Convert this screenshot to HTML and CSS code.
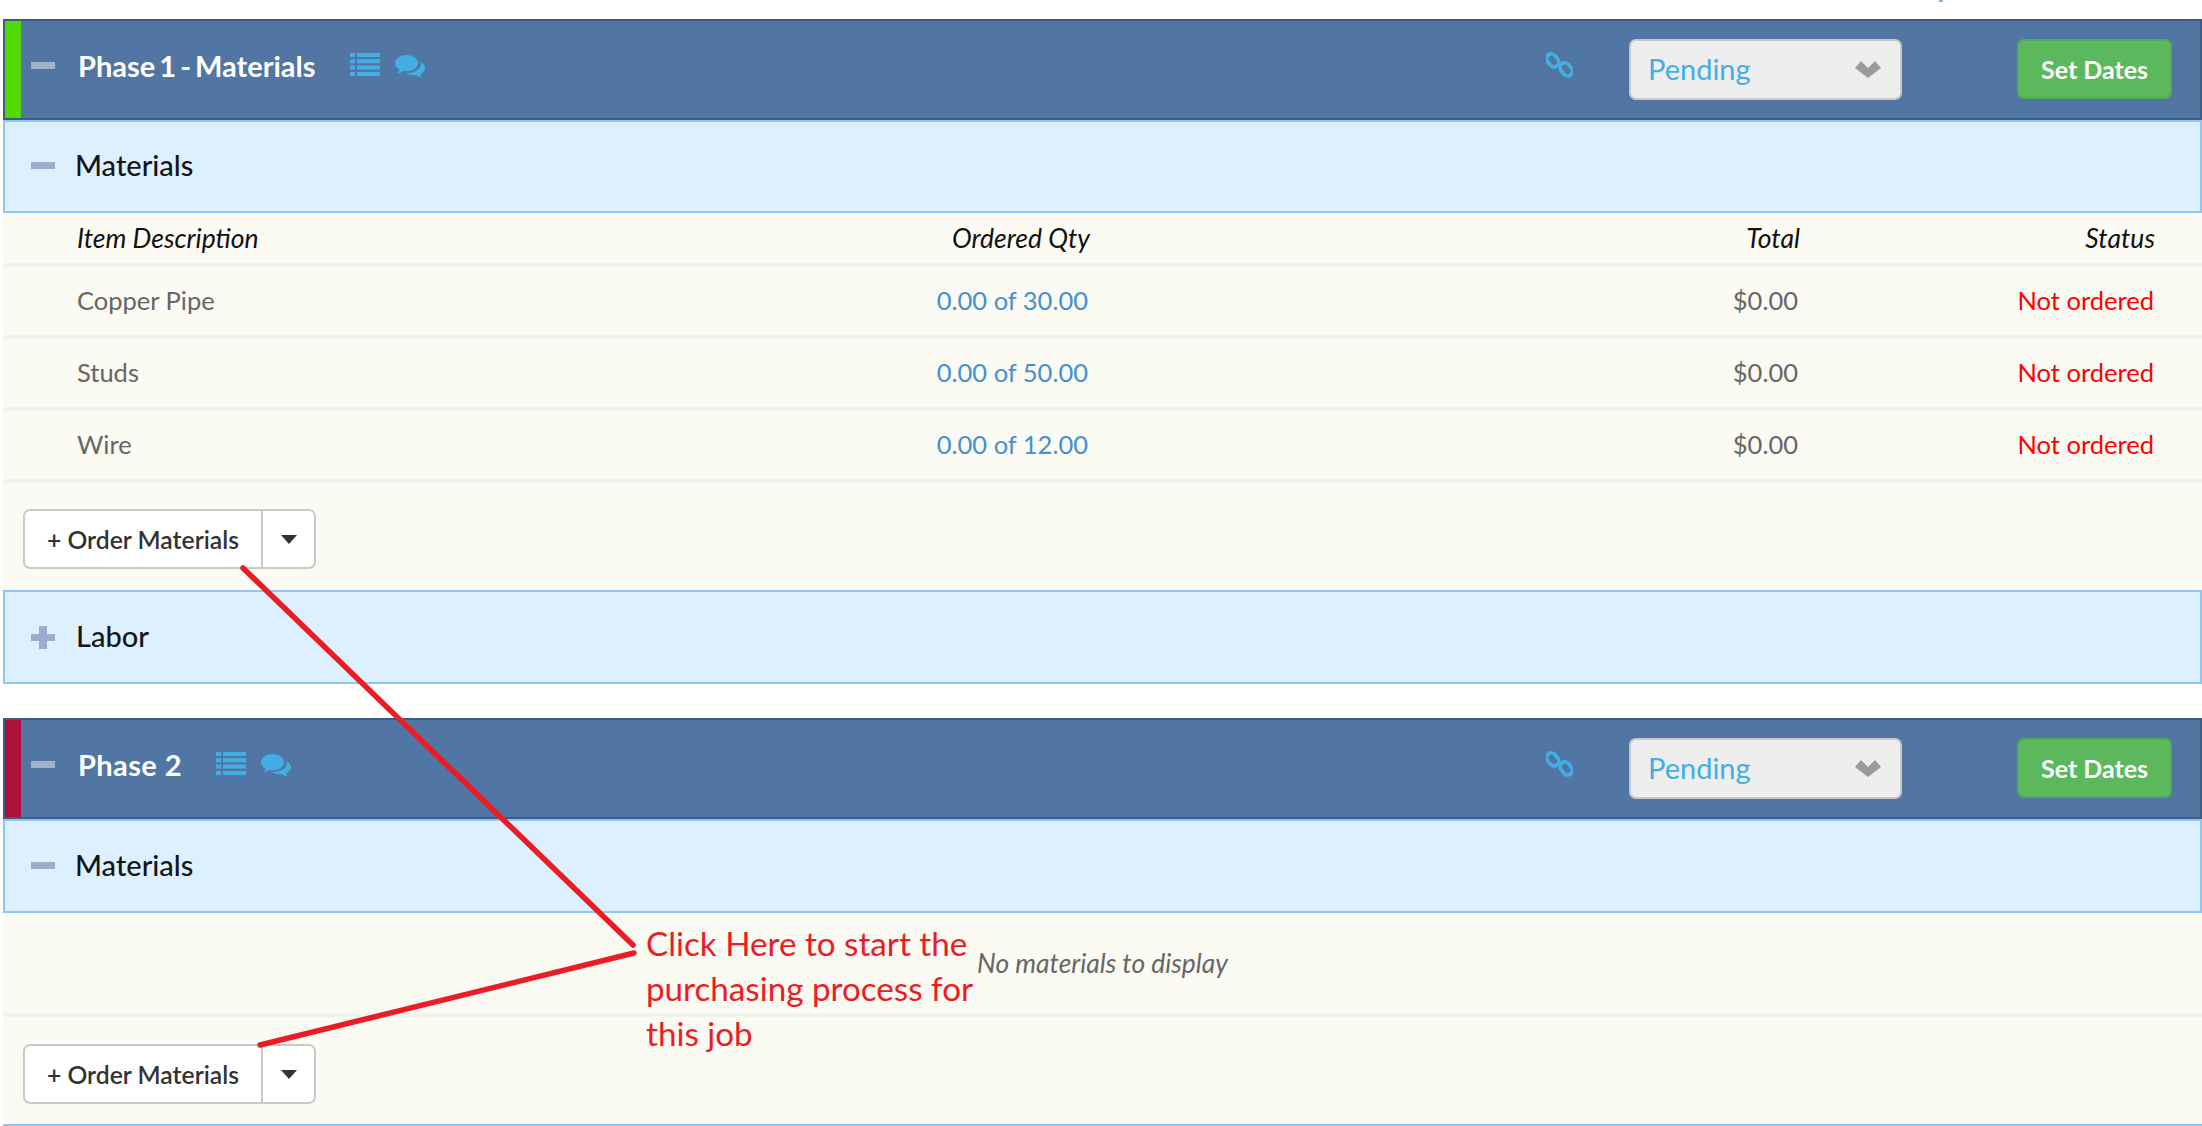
FILE: index.html
```html
<!DOCTYPE html>
<html lang="en">
<head>
<meta charset="utf-8">
<title>Phases</title>
<link rel="stylesheet" href="styles.css">
</head>
<body>
<svg width="0" height="0" class="defs">
  <symbol id="list" viewBox="0 0 30 23"><path d="M0 0h5v4H0zM7 0h23v4H7zM0 6.300h5v4H0zM7 6.300h23v4H7zM0 12.600h5v4H0zM7 12.600h23v4H7zM0 19h5v4H0zM7 19h23v4H7z"/></symbol>
  <symbol id="chat" viewBox="0 0 30 24"><path d="M11.500 0C5.200 0 0 3.700 0 8.200c0 2.700 1.800 5 4.600 6.500-.4 1.300-1.100 2.500-2.200 3.600 2.300-.3 4.500-1.200 6.200-2.300.9.200 1.900.300 2.900.300 6.300 0 11.500-3.700 11.500-8.100S17.800 0 11.500 0z"/><path d="M25.500 6.500c.3.700.4 1.400.4 2.100 0 5.300-5.700 9.400-12.800 9.400-.9 0-1.800-.1-2.600-.2 1.900 1.500 4.700 2.500 7.700 2.500.9 0 1.700-.1 2.500-.2 1.500 1.200 3.500 2.100 6.100 2.800-.9-1.100-1.500-2.200-1.700-3.400 2.900-1.400 4.900-3.700 4.900-6.300 0-2.700-2.500-5.300-4.500-6.700z"/></symbol>
  <symbol id="link" viewBox="0 0 27 28"><g fill="none" stroke-width="3.600"><rect x="2" y="2.500" width="9.500" height="14" rx="4.700" transform="rotate(-38 6.700 9.500)"/><rect x="15.500" y="11.500" width="9.500" height="14" rx="4.700" transform="rotate(-38 20.200 18.500)"/></g></symbol>
  <symbol id="chev" viewBox="0 0 26 17"><path d="M0 7l6-7 7 7 7-7 6 7-13 10z"/></symbol>
</svg>

<main class="page">
  <div class="top-mark"></div>

  <section class="phase">
    <header class="phase-bar">
      <span class="flag flag-green"></span>
      <span class="toggle toggle-light"></span>
      <h2 class="phase-title">Phase 1 - Materials</h2>
      <svg class="ico ico-list"><use href="#list"/></svg>
      <svg class="ico ico-chat"><use href="#chat"/></svg>
      <svg class="ico ico-link"><use href="#link"/></svg>
      <div class="status-select"><span>Pending</span><svg class="chev"><use href="#chev"/></svg></div>
      <button class="set-dates">Set Dates</button>
    </header>
    <div class="group-bar">
      <span class="toggle"></span>
      <h3 class="group-title">Materials</h3>
    </div>
    <div class="grid-row head-row">
      <span>Item Description</span><span class="r">Ordered Qty</span><span class="r">Total</span><span class="r">Status</span>
    </div>
    <div class="grid-row item-row">
      <span>Copper Pipe</span><span class="r qty">0.00 of 30.00</span><span class="r">$0.00</span><span class="r not-ordered">Not ordered</span>
    </div>
    <div class="grid-row item-row">
      <span>Studs</span><span class="r qty">0.00 of 50.00</span><span class="r">$0.00</span><span class="r not-ordered">Not ordered</span>
    </div>
    <div class="grid-row item-row">
      <span>Wire</span><span class="r qty">0.00 of 12.00</span><span class="r">$0.00</span><span class="r not-ordered">Not ordered</span>
    </div>
    <div class="order-foot">
      <div class="split-btn"><span class="split-main">+ Order Materials</span><span class="split-caret"><i></i></span></div>
    </div>
    <div class="group-bar group-bar-labor">
      <span class="toggle toggle-plus"></span>
      <h3 class="group-title group-title-labor">Labor</h3>
    </div>
  </section>

  <section class="phase phase-second">
    <header class="phase-bar">
      <span class="flag flag-red"></span>
      <span class="toggle toggle-light"></span>
      <h2 class="phase-title phase-title-short">Phase 2</h2>
      <svg class="ico ico-list"><use href="#list"/></svg>
      <svg class="ico ico-chat"><use href="#chat"/></svg>
      <svg class="ico ico-link"><use href="#link"/></svg>
      <div class="status-select"><span>Pending</span><svg class="chev"><use href="#chev"/></svg></div>
      <button class="set-dates">Set Dates</button>
    </header>
    <div class="group-bar group-bar-tall">
      <span class="toggle"></span>
      <h3 class="group-title">Materials</h3>
    </div>
    <div class="empty-row">No materials to display</div>
    <div class="order-foot order-foot-last">
      <div class="split-btn"><span class="split-main">+ Order Materials</span><span class="split-caret"><i></i></span></div>
    </div>
  </section>

  <svg class="callout-lines" width="2202" height="1126" viewBox="0 0 2202 1126">
    <path d="M243 568L633 945M634 953L260 1045"/>
  </svg>
  <p class="callout-text">Click Here to start the<br>purchasing process for<br>this job</p>
</main>
</body>
</html>
```
FILE: styles.css
```css
* { box-sizing: border-box; }
html, body { margin: 0; padding: 0; background: #fff; }
body { width: 2202px; height: 1126px; overflow: hidden; font-family: "Lato", "Open Sans", sans-serif; }
.defs { position: absolute; }
.page { position: relative; width: 2202px; height: 1126px; padding: 19px 0 0 3px; }
.top-mark { position: absolute; left: 1939px; top: 0; width: 4px; height: 2px; background: #7db7ee; }

.phase-second { margin-top: 34px; }

.phase-bar { height: 101px; display: flex; align-items: center; background: #5176a3; border: 2px solid #3b5c85; position: relative; }
.flag { width: 16px; align-self: stretch; flex: none; }
.flag-green { background: #52d900; }
.flag-red { background: #b01038; }

.toggle { display: block; flex: none; width: 24px; height: 7px; background: #9aaecb; position: relative; }
.toggle-light { background: #a0b2cc; margin: -8px 0 0 10px; }
.toggle-plus::after { content: ""; position: absolute; left: 8px; top: -8px; width: 8px; height: 23px; background: #9aaecb; }

.phase-title { margin: -8px 0 0 23px; font-size: 29px; word-spacing: -3px; line-height: 36px; font-weight: 700; color: #fff; white-space: nowrap; }
.phase-title-short { word-spacing: 0; letter-spacing: .4px; }
.ico { flex: none; fill: #42aee3; }
.ico-list { width: 30px; height: 23px; margin: -10px 0 0 34px; }
.ico-chat { width: 30px; height: 24px; margin: -6px 0 0 15px; }
.ico-link { width: 27px; height: 28px; margin: -10px 0 0 auto; stroke: #42aee3; fill: none; }
.status-select { width: 273px; height: 61px; margin: 0 0 0 56px; display: flex; align-items: center; justify-content: space-between; background: #eeeeee; border: 2px solid #c8c8c8; border-radius: 7px; padding: 0 19px 2px 17px; color: #42aee3; font-size: 29px; }
.chev { width: 26px; height: 17px; fill: #9b9b9b; margin-top: 2px; }
.set-dates { width: 155px; height: 60px; margin: -1px 28px 0 115px; border: 2px solid #50ad55; border-radius: 7px; background: #5cb85c; color: #fff; font: 700 25px "Lato", sans-serif; padding: 0; }

.group-bar { height: 93px; display: flex; align-items: center; padding-left: 26px; background: #ddf0ff; border: 2px solid #90c6f3; }
.group-bar .toggle { margin-top: -2px; }
.group-bar-tall { height: 94px; }
.group-title { margin: -3px 0 0 20px; font-size: 29px; font-weight: 500; line-height: 36px; color: #151515; }
.group-bar-labor { height: 94px; }
.group-bar-labor .toggle { margin-top: 0; }
.group-title-labor { margin: -2px 0 0 21px; }

.grid-row { display: grid; grid-template-columns: 500px 513px 710px 355px; padding-left: 74px; background: #fbfaf3; border-bottom: 4px solid #f3f2ed; font-size: 25.5px; align-items: center; }
.grid-row .r { text-align: right; }
.head-row { height: 54px; color: #111; font-style: italic; font-size: 26.5px; }
.item-row { height: 72px; color: #666; padding-bottom: 2px; }
.item-row .r { padding-right: 2px; }
.item-row .not-ordered { padding-right: 1px; }
.qty { color: #4490d3; }
.not-ordered { color: #ff0000; }

.order-foot { height: 107px; padding: 26px 0 0 20px; background: #fbfaf3; }
.order-foot-last { height: 109px; padding-top: 27px; border-bottom: 2px solid #90c6f3; }
.split-btn { width: 293px; height: 60px; display: flex; align-items: stretch; background: #fff; border: 2px solid #c9c9c9; border-radius: 7px; color: #333; font-size: 24.7px; font-weight: 600; }
.split-main { width: 238px; display: flex; align-items: center; justify-content: center; border-right: 2px solid #c9c9c9; }
.split-caret { flex: 1; display: flex; align-items: center; justify-content: center; }
.split-caret i { display: block; width: 0; height: 0; border-style: solid; border-width: 9px 8px 0; border-color: #333 transparent transparent; }

.empty-row { height: 104px; display: flex; align-items: center; justify-content: center; background: #fbfaf3; border-bottom: 4px solid #f3f2ed; color: #666; font-style: italic; font-size: 26.4px; }

.callout-lines { position: absolute; left: 0; top: 0; pointer-events: none; }
.callout-lines path { fill: none; stroke: #ed1c24; stroke-width: 5.500; stroke-linecap: round; }
.callout-text { position: absolute; left: 646px; top: 921px; margin: 0; font-family: "Lato", sans-serif; font-size: 33.2px; line-height: 45px; color: #ed1c24; white-space: nowrap; }
```
